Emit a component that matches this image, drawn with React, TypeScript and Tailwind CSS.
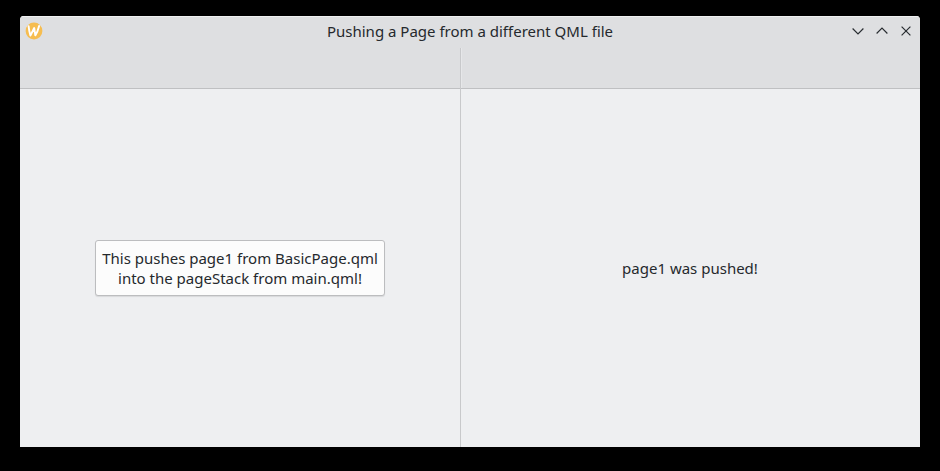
function AppIcon() {
  return (
    <svg className="size-[18px]" viewBox="0 0 18 18" fill="none">
      <circle cx="9" cy="9" r="8.4" fill="#f6bd50" />
      <path
        d="M3.6 4.2C3.9 7.5 4.5 10.5 5.4 13.6L9.2 6L10.3 13.4C12.1 10.6 13.3 7.4 14.1 4"
        stroke="#fff"
        strokeWidth="1.9"
        strokeLinejoin="round"
        strokeLinecap="round"
      />
    </svg>
  );
}

function ControlIcon({ d }: { d: string }) {
  return (
    <svg className="h-3 w-3" viewBox="0 0 12 12" fill="none" stroke="#2b2f33" strokeWidth="1.2">
      <path d={d} />
    </svg>
  );
}

function TitleBar() {
  return (
    <header className="grid h-8 grid-cols-[1fr_auto_1fr] items-center bg-[#dedfe1] pr-2 pb-[2px] pl-[5px] shadow-[inset_0_1px_0_#f0f1f2]">
      <AppIcon />
      <h1 className="ml-[3px] text-[15px] leading-5 whitespace-nowrap">
        Pushing a Page from a different QML file
      </h1>
      <div className="flex justify-end gap-3">
        <button aria-label="Minimize">
          <ControlIcon d="M0.6 3.5L6 8.9L11.4 3.5" />
        </button>
        <button aria-label="Maximize">
          <ControlIcon d="M0.6 8.5L6 3.1L11.4 8.5" />
        </button>
        <button aria-label="Close">
          <ControlIcon d="M1.6 1.6L10.4 10.4M10.4 1.6L1.6 10.4" />
        </button>
      </div>
    </header>
  );
}

export default function App() {
  return (
    <div className="h-[471px] w-[940px] bg-black px-5 pt-4 pb-6 font-['Noto_Sans',sans-serif] text-[15px] text-[#25292d]">
      <div className="flex h-full flex-col overflow-hidden rounded-t-[4px] bg-[#eeeff1]">
        <TitleBar />
        <main className="flex flex-1">
          <section className="flex w-[441px] flex-col border-r border-[#c8c9cb]">
            <div className="h-[41px] border-b border-[#bfc0c2] bg-[#dedfe1]" />
            <div className="flex flex-1 items-center justify-center">
              <button className="h-14 w-[290px] rounded-[3px] border border-[#bcbdbf] bg-[#fcfcfc] leading-5 whitespace-nowrap shadow-[0_1px_1px_#00000018]">
                This pushes page1 from BasicPage.qml
                <br />
                into the pageStack from main.qml!
              </button>
            </div>
          </section>
          <section className="flex flex-1 flex-col">
            <div className="h-[41px] border-b border-[#bfc0c2] bg-[#dedfe1] shadow-[inset_1px_0_0_#e6e7e9]" />
            <div className="flex flex-1 items-center justify-center pr-px leading-5">page1 was pushed!</div>
          </section>
        </main>
      </div>
    </div>
  );
}
